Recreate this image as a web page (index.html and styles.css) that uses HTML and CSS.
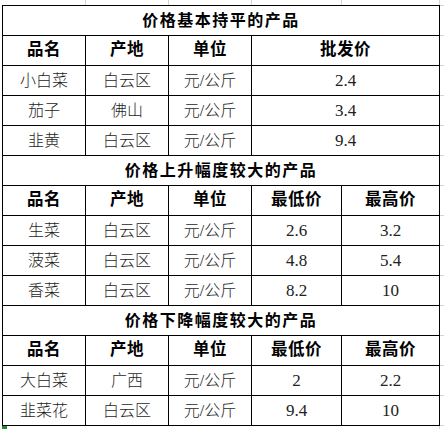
FILE: index.html
```html
<!DOCTYPE html>
<html lang="zh-CN">
<head>
<meta charset="utf-8">
<title>价格表</title>
<link rel="stylesheet" href="styles.css">
</head>
<body>
<div class="sheet">
  <div class="top-strip">
    <div class="gl w83"></div><div class="gl w83"></div><div class="gl w83"></div><div class="gl w90"></div><div class="gl w98"></div>
  </div>
  <div class="main">
    <div class="grid">
      <div class="c title span5">价格基本持平的产品</div>
      <div class="c head">品名</div><div class="c head">产地</div><div class="c head">单位</div><div class="c head span2">批发价</div>
      <div class="c">小白菜</div><div class="c">白云区</div><div class="c">元/公斤</div><div class="c num span2">2.4</div>
      <div class="c">茄子</div><div class="c">佛山</div><div class="c">元/公斤</div><div class="c num span2">3.4</div>
      <div class="c">韭黄</div><div class="c">白云区</div><div class="c">元/公斤</div><div class="c num span2">9.4</div>

      <div class="c title span5">价格上升幅度较大的产品</div>
      <div class="c head">品名</div><div class="c head">产地</div><div class="c head">单位</div><div class="c head">最低价</div><div class="c head">最高价</div>
      <div class="c">生菜</div><div class="c">白云区</div><div class="c">元/公斤</div><div class="c num">2.6</div><div class="c num">3.2</div>
      <div class="c">菠菜</div><div class="c">白云区</div><div class="c">元/公斤</div><div class="c num">4.8</div><div class="c num">5.4</div>
      <div class="c">香菜</div><div class="c">白云区</div><div class="c">元/公斤</div><div class="c num">8.2</div><div class="c num">10</div>

      <div class="c title span5">价格下降幅度较大的产品</div>
      <div class="c head">品名</div><div class="c head">产地</div><div class="c head">单位</div><div class="c head">最低价</div><div class="c head">最高价</div>
      <div class="c">大白菜</div><div class="c">广西</div><div class="c">元/公斤</div><div class="c num">2</div><div class="c num">2.2</div>
      <div class="c">韭菜花</div><div class="c">白云区</div><div class="c">元/公斤</div><div class="c num">9.4</div><div class="c num">10</div>
    </div>
    <div class="right-strip">
      <div class="rfirst"></div>
      <div class="rc"></div><div class="rc"></div><div class="rc"></div><div class="rc"></div><div class="rc"></div><div class="rc"></div><div class="rc"></div>
      <div class="rc"></div><div class="rc"></div><div class="rc"></div><div class="rc"></div><div class="rc"></div><div class="rc"></div><div class="rc"></div>
    </div>
  </div>
  <div class="bottom-strip">
    <div class="handle"></div>
    <div class="bl"></div>
  </div>
</div>
</body>
</html>
```

FILE: styles.css
```css
html, body {
  margin: 0;
  padding: 0;
  background: #ffffff;
}

.sheet {
  display: flex;
  flex-direction: column;
  width: 444px;
  font-family: "Liberation Serif", "Noto Sans CJK SC", serif;
}

.top-strip {
  display: flex;
  height: 5px;
  padding-left: 3px;
}

.gl {
  box-sizing: border-box;
  height: 5px;
  border-right: 1px solid #d4d4d4;
}

.w83 { width: 83px; }
.w90 { width: 90px; }
.w98 { width: 98px; }

.main {
  display: flex;
  align-items: flex-start;
}

.grid {
  margin-left: 2px;
  display: grid;
  grid-template-columns: 83px 83px 83px 90px 98px;
  grid-auto-rows: 30px;
  border-left: 1px solid #000;
  border-top: 1px solid #000;
}

.c {
  box-sizing: border-box;
  border-right: 1px solid #000;
  border-bottom: 1px solid #000;
  display: flex;
  align-items: center;
  justify-content: center;
  font-size: 16px;
  font-weight: 300;
  color: #1e1e1e;
  line-height: 1;
  white-space: nowrap;
}

.span5 { grid-column: span 5; }
.span2 { grid-column: span 2; }

.title {
  font-size: 16px;
  font-weight: 700;
  color: #000;
  letter-spacing: 1.5px;
}

.head {
  font-size: 16.5px;
  font-weight: 700;
  color: #000;
  letter-spacing: 0.5px;
}

.num {
  font-size: 17px;
  color: #222;
}

.right-strip {
  display: flex;
  flex-direction: column;
  width: 5px;
}

.rfirst {
  height: 1px;
  background: #d4d4d4;
}

.rc {
  box-sizing: border-box;
  height: 30px;
  border-bottom: 1px solid #d4d4d4;
}

.bottom-strip {
  display: flex;
  height: 4px;
  padding-left: 2px;
}

.handle {
  width: 5px;
  height: 3px;
  background: #1f8a2e;
}

.bl {
  box-sizing: border-box;
  width: 433px;
  height: 4px;
  border-right: 1px solid #d4d4d4;
}
```
